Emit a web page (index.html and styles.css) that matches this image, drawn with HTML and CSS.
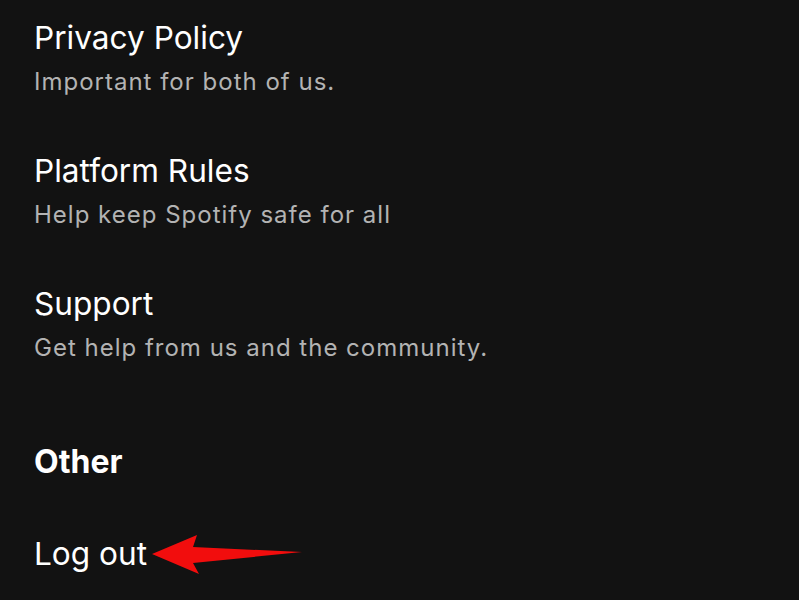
FILE: index.html
```html
<!DOCTYPE html>
<html lang="en">
<head>
<meta charset="utf-8">
<title>Settings</title>
<link rel="stylesheet" href="styles.css">
</head>
<body>
<main class="list">
  <section class="item">
    <div class="title">Privacy Policy</div>
    <div class="sub">Important for both of us.</div>
  </section>
  <section class="item">
    <div class="title">Platform Rules</div>
    <div class="sub">Help keep Spotify safe for all</div>
  </section>
  <section class="item">
    <div class="title">Support</div>
    <div class="sub">Get help from us and the community.</div>
  </section>
  <h2 class="heading">Other</h2>
  <div class="logout">
    <span class="title">Log out</span>
    <svg class="arrow" width="160" height="44" viewBox="0 0 160 44" aria-hidden="true">
      <path d="M1 21 L46 2 L42 14 L151 19 L42 30 L48 41 Z" fill="#f20d0d"/>
    </svg>
  </div>
</main>
</body>
</html>
```
FILE: styles.css
```css
html, body {
  margin: 0;
  padding: 0;
  background: #121212;
}
body {
  font-family: Inter, "Liberation Sans", sans-serif;
  color: #ffffff;
  width: 799px;
  height: 600px;
  overflow: hidden;
}
.list {
  display: flex;
  flex-direction: column;
  padding: 18px 0 0 34px;
}
.item {
  display: flex;
  flex-direction: column;
  gap: 8px;
  margin-bottom: 53px;
}
.title {
  font-size: 31.6px;
  line-height: 40px;
  font-weight: 400;
  letter-spacing: 0;
}
.sub {
  font-size: 24px;
  line-height: 32px;
  color: #b3b3b3;
  letter-spacing: 1px;
}
.heading {
  margin: 25px 0 0 0;
  font-size: 32px;
  line-height: 40px;
  font-weight: 700;
}
.logout {
  display: flex;
  align-items: center;
  gap: 4px;
  margin-top: 49px;
}
.arrow {
  display: block;
  margin-top: 2px;
}
```
